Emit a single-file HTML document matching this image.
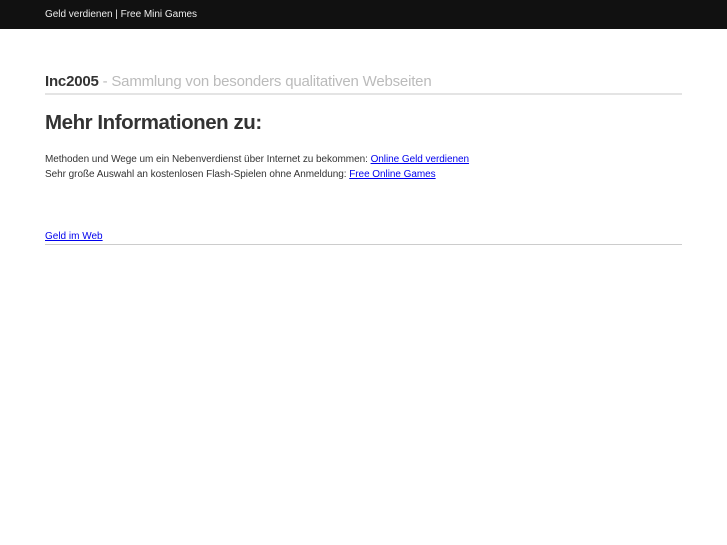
<!DOCTYPE html>
<html><head><meta charset="utf-8"><style>
body{margin:0;background:#fff;font-family:"Liberation Sans",sans-serif;width:727px;height:545px;overflow:hidden}
.top{background:#111;height:29px;color:#eee;font-size:10px;line-height:29px;padding-left:45px;letter-spacing:-0.02px}
h1{position:absolute;top:73px;left:45px;width:637px;margin:0;font-size:15px;color:#333;font-weight:bold;border-bottom:2px solid #e4e4e4;height:20px;line-height:18px;letter-spacing:-0.2px}
h1 span{color:#bbb;font-weight:normal}
h2{position:absolute;top:111px;left:45px;margin:0;font-size:20.5px;color:#333;letter-spacing:-0.45px}
.p{position:absolute;top:152px;left:45px;font-size:10px;color:#333;line-height:15px;letter-spacing:-0.05px}
a{color:#00e}
.f{position:absolute;top:229px;left:45px;width:637px;font-size:10px;border-bottom:1px solid #ccc;height:15px;line-height:15px}
</style></head><body>
<div class="top">Geld verdienen | Free Mini Games</div>
<h1>Inc2005 <span>- Sammlung von besonders qualitativen Webseiten</span></h1>
<h2>Mehr Informationen zu:</h2>
<div class="p">Methoden und Wege um ein Nebenverdienst über Internet zu bekommen: <a href="#">Online Geld verdienen</a><br>Sehr große Auswahl an kostenlosen Flash-Spielen ohne Anmeldung: <a href="#">Free Online Games</a></div>
<div class="f"><a href="#">Geld im Web</a></div>
</body></html>
